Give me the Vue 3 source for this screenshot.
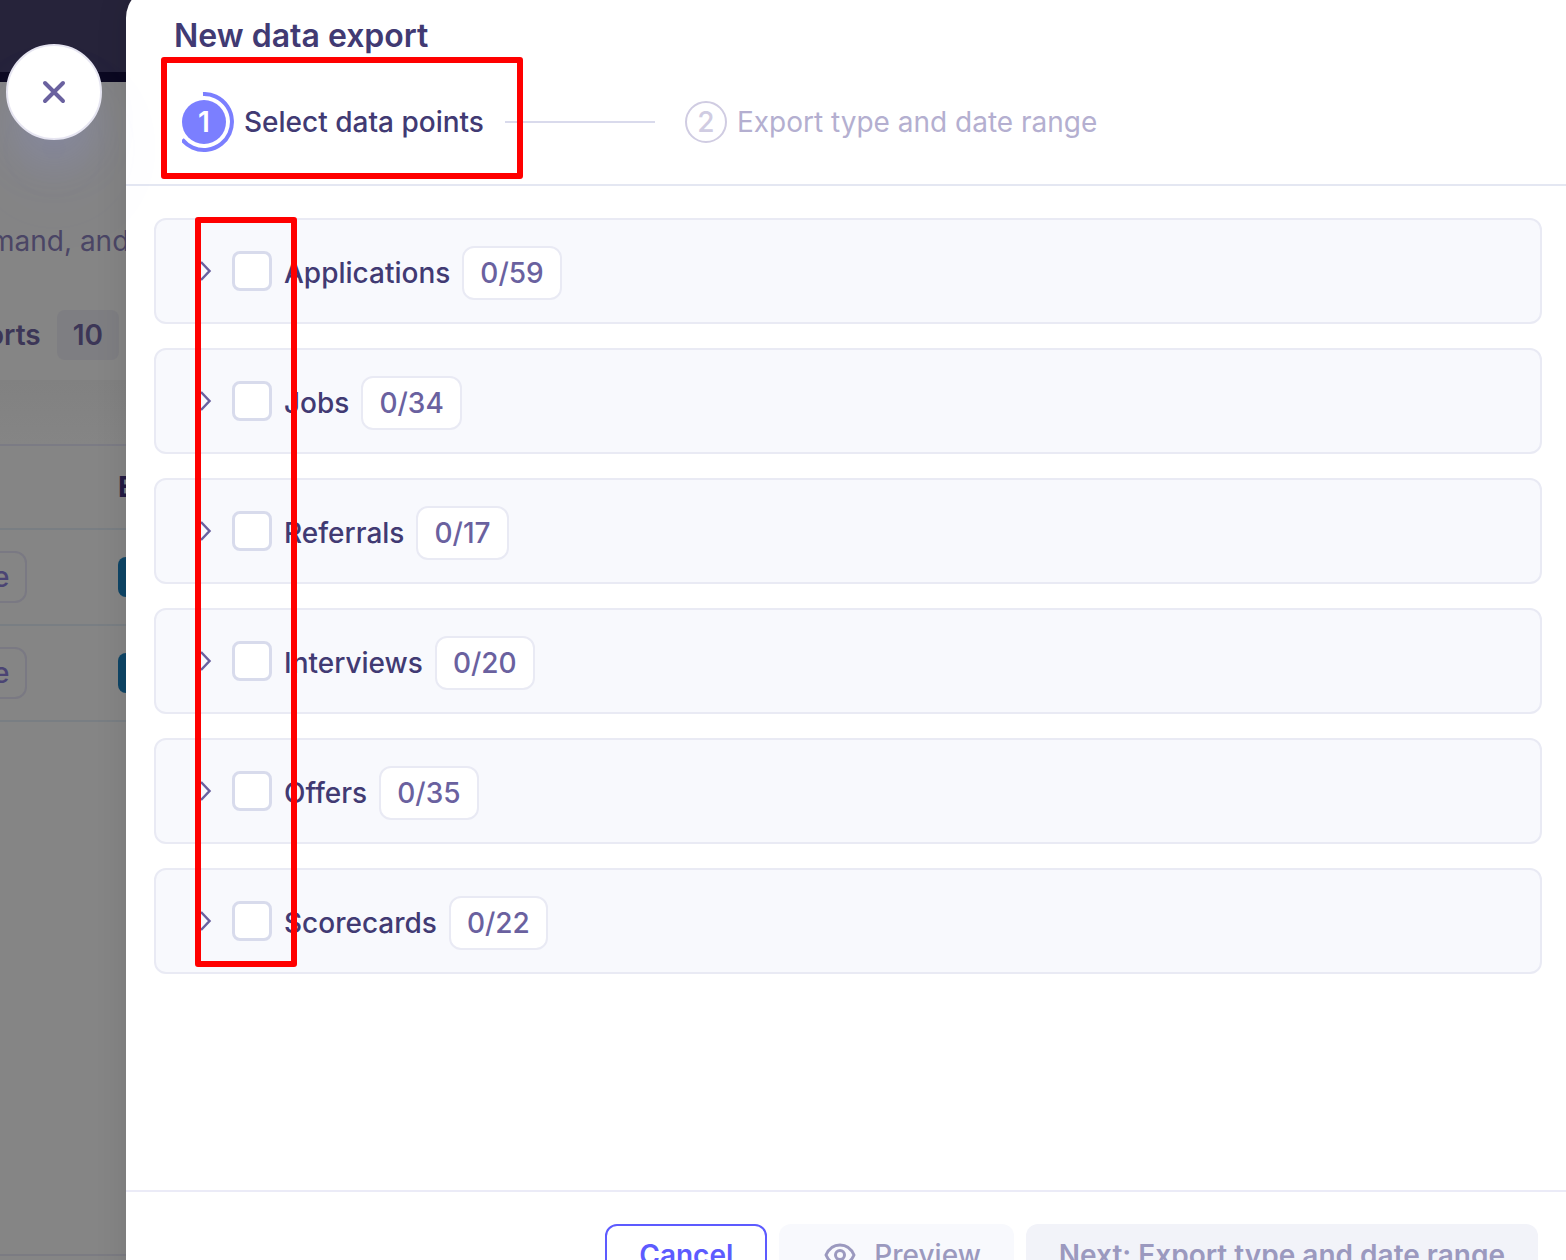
<template>
  <div class="screen">
    <!-- Page behind the drawer -->
    <div class="page">
      <div class="page-topbar"></div>
      <div class="page-intro">
        <p class="page-description">mand, and</p>
        <div class="page-tab">
          <span class="page-tab-label">orts</span>
          <span class="page-tab-count">10</span>
        </div>
      </div>
      <div class="page-panel">
        <table class="page-table">
          <thead>
            <tr>
              <th class="col-type"></th>
              <th>E</th>
            </tr>
          </thead>
          <tbody>
            <tr v-for="row in exportRows" :key="row.id">
              <td class="col-type"><span class="type-chip">{{ row.type }}</span></td>
              <td><span class="status-block"></span></td>
            </tr>
          </tbody>
        </table>
      </div>
      <div class="page-bottom"></div>
    </div>

    <!-- Drawer -->
    <section class="drawer" aria-labelledby="drawer-title">
      <header class="drawer-header">
        <h2 id="drawer-title">New data export</h2>
        <div class="stepper">
          <div class="step active">
            <svg class="step-progress" viewBox="0 0 52 60" aria-hidden="true">
              <circle cx="22" cy="30" r="22" fill="#7b7fff" />
              <path d="M21 2 A28 28 0 1 1 0.2 47.6" fill="none" stroke="#7b7fff" stroke-width="4" />
            </svg>
            <span class="step-number">1</span>
            <span class="step-label">Select data points</span>
            <div class="highlight step-highlight"></div>
          </div>
          <div class="step-line"></div>
          <div class="step">
            <span class="step-circle">2</span>
            <span class="step-label">Export type and date range</span>
          </div>
        </div>
      </header>

      <div class="drawer-body">
        <div class="group-list">
          <div v-for="group in groups" :key="group.id" class="group">
            <button
              type="button"
              class="group-toggle"
              :aria-label="group.name"
              :aria-expanded="group.open"
              @click="group.open = !group.open"
            >
              <svg viewBox="0 0 24 24" width="24" height="24" aria-hidden="true">
                <path d="M5 3 L13.500 12 L5 21" fill="none" stroke="#6a619f" stroke-width="2.500" />
              </svg>
            </button>
            <input :id="group.id" v-model="group.checked" type="checkbox" class="group-check" />
            <label :for="group.id" class="group-name">{{ group.name }}</label>
            <span class="group-count">{{ group.checked ? group.total : 0 }}/{{ group.total }}</span>
          </div>
          <div class="highlight list-highlight"></div>
        </div>
      </div>

      <footer class="drawer-footer">
        <button type="button" class="btn btn-cancel">Cancel</button>
        <button type="button" class="btn btn-preview" disabled>
          <svg viewBox="0 0 32 24" width="32" height="24" aria-hidden="true">
            <g fill="none" stroke="#9b99bf" stroke-width="3">
              <path d="M2 12 C8 -1.300 24 -1.300 30 12 C24 25.300 8 25.300 2 12 Z" stroke-linejoin="round" />
              <circle cx="16" cy="12" r="4.500" />
            </g>
          </svg>
          Preview
        </button>
        <button type="button" class="btn btn-next" disabled>Next: Export type and date range</button>
      </footer>
    </section>

    <button type="button" class="close-button" aria-label="Close">
      <svg viewBox="0 0 24 24" width="24" height="24" aria-hidden="true">
        <path d="M3 3 L21 21 M21 3 L3 21" stroke="#6a619f" stroke-width="4" stroke-linecap="round" />
      </svg>
    </button>
  </div>
</template>

<script setup>
import { ref } from 'vue'

const exportRows = [
  { id: 1, type: 'e' },
  { id: 2, type: 'e' }
]

const groups = ref([
  { id: 'applications', name: 'Applications', total: 59, checked: false, open: false },
  { id: 'jobs', name: 'Jobs', total: 34, checked: false, open: false },
  { id: 'referrals', name: 'Referrals', total: 17, checked: false, open: false },
  { id: 'interviews', name: 'Interviews', total: 20, checked: false, open: false },
  { id: 'offers', name: 'Offers', total: 35, checked: false, open: false },
  { id: 'scorecards', name: 'Scorecards', total: 22, checked: false, open: false }
])
</script>

<style>
body {
  margin: 0;
}
</style>

<style scoped>
.screen {
  position: relative;
  height: 100vh;
  overflow: hidden;
  font-family: Inter, "Liberation Sans", sans-serif;
  font-size: 28px;
  line-height: 40px;
  color: #413a73;
}

.screen *,
.screen *::before {
  box-sizing: border-box;
}

button {
  font: inherit;
  cursor: pointer;
}

/* Page behind */
.page {
  position: absolute;
  inset: 0;
  display: flex;
  flex-direction: column;
  background: #858585;
  color: #3c3657;
}

.page-topbar {
  height: 82px;
  background: #26233a;
  border-bottom: 10px solid #0c0920;
}

.page-intro {
  padding: 139px 0 20px;
}

.page-description {
  margin: 0 0 49px -10px;
  color: #4b4665;
  white-space: nowrap;
}

.page-tab {
  display: flex;
  align-items: center;
  gap: 16px;
  margin-left: -13px;
  font-weight: 600;
}

.page-tab-count {
  padding: 5px 16px;
  border-radius: 8px;
  background: #7e7e82;
}

.page-panel {
  flex: 1;
  padding-top: 64px;
  background: linear-gradient(#818181, #858585 64px);
}

.page-table {
  width: 100%;
  border-spacing: 0;
  table-layout: fixed;
}

.page-table th,
.page-table td {
  height: 96px;
  padding: 0;
  border-top: 2px solid #797e83;
  text-align: left;
}

.page-table th {
  height: 84px;
  border-top-color: #7b7b84;
  color: #231b43;
  font-weight: 700;
}

.page-table tbody tr:last-child td {
  height: 98px;
  border-bottom: 2px solid #797e83;
}

.page-table .col-type {
  width: 118px;
}

.type-chip {
  display: inline-block;
  margin-left: -25px;
  padding: 4px 16px;
  border: 2px solid #7a7983;
  border-radius: 12px;
  color: #4b4474;
  font-weight: 500;
  vertical-align: middle;
}

.status-block {
  display: block;
  width: 96px;
  height: 40px;
  border-radius: 8px;
  background: #0e4566;
}

.page-bottom {
  height: 6px;
  border-top: 2px solid #7b7b82;
}

/* Drawer */
.drawer {
  position: relative;
  display: flex;
  flex-direction: column;
  min-height: calc(100vh + 72px);
  margin: -14px 0 0 126px;
  border-radius: 32px 0 0 32px;
  background: #fff;
  box-shadow: 0 0 32px rgba(0, 0, 0, 0.1);
}

.drawer-header {
  padding: 30px 48px 32px;
  border-bottom: 2px solid #e4e7f2;
}

h2 {
  margin: 0 0 36px;
  font-size: 32px;
  font-weight: 600;
  line-height: 40px;
}

.stepper {
  display: flex;
  align-items: center;
  height: 60px;
}

.step {
  position: relative;
  display: flex;
  align-items: center;
  gap: 10px;
  color: #b4afd0;
  white-space: nowrap;
}

.step.active {
  padding-left: 8px;
  color: #413a73;
  font-weight: 500;
}

.step-progress {
  width: 52px;
  height: 60px;
}

.step-number {
  position: absolute;
  left: 8px;
  width: 44px;
  color: #fff;
  font-weight: 600;
  text-align: center;
}

.step-circle {
  width: 42px;
  height: 42px;
  border: 2px solid #d0cce2;
  border-radius: 50%;
  color: #d0cce2;
  font-weight: 500;
  line-height: 38px;
  text-align: center;
}

.step-line {
  width: 150px;
  height: 2px;
  margin: 0 30px 0 21px;
  background: #d9daec;
}

/* Red frames */
.highlight {
  position: absolute;
  border: 6px solid #f00;
  border-radius: 3px;
  pointer-events: none;
}

.step-highlight {
  z-index: 1;
  inset: -35px -39px -27px -13px;
}

.list-highlight {
  top: -1px;
  bottom: 7px;
  left: 41px;
  width: 102px;
}

.drawer-body {
  flex: 1;
  padding: 32px 24px 32px 28px;
}

.group-list {
  position: relative;
  display: flex;
  flex-direction: column;
  gap: 24px;
}

.group {
  display: flex;
  align-items: center;
  gap: 12px;
  padding: 26px 40px 22px;
  border: 2px solid #e9eaf4;
  border-radius: 12px;
  background: #f8f9fd;
}

.group-toggle {
  display: flex;
  margin-bottom: 4px;
  padding: 0;
  border: none;
  background: none;
}

.group-check {
  appearance: none;
  width: 40px;
  height: 40px;
  margin: 0 0 4px;
  border: 3px solid #d8dbec;
  border-radius: 8px;
  background: #fff;
}

.group-check:checked {
  background: #7b7fff;
}

.group-name {
  font-weight: 500;
}

.group-count {
  padding: 5px 16px;
  border: 2px solid #e9eaf4;
  border-radius: 12px;
  background: #fff;
  color: #6a619f;
  font-weight: 500;
}

.drawer-footer {
  display: flex;
  justify-content: flex-end;
  gap: 12px;
  padding: 32px 28px;
  border-top: 2px solid #ebebf7;
}

.btn {
  display: flex;
  align-items: center;
  height: 62px;
  padding: 0 33px;
  border: none;
  border-radius: 12px;
  font-weight: 600;
  white-space: nowrap;
}

.btn-cancel {
  padding: 0 32px;
  border: 2px solid #5d5bff;
  background: #fff;
  color: #5d5bff;
}

.btn-preview {
  gap: 18px;
  padding: 0 33px 0 45px;
  background: #f8f9fd;
  color: #9b99bf;
  font-weight: 500;
}

.btn-next {
  background: #f2f3f9;
  color: #9b99bf;
}

.close-button {
  position: absolute;
  top: 44px;
  left: 6px;
  display: flex;
  align-items: center;
  justify-content: center;
  width: 96px;
  height: 96px;
  padding: 0;
  border: 2px solid #e6e5f1;
  border-radius: 50%;
  background: #fff;
  box-shadow: 0 56px 96px rgba(123, 127, 255, 0.06), 0 32px 48px -12px rgba(145, 160, 255, 0.24);
}
</style>
